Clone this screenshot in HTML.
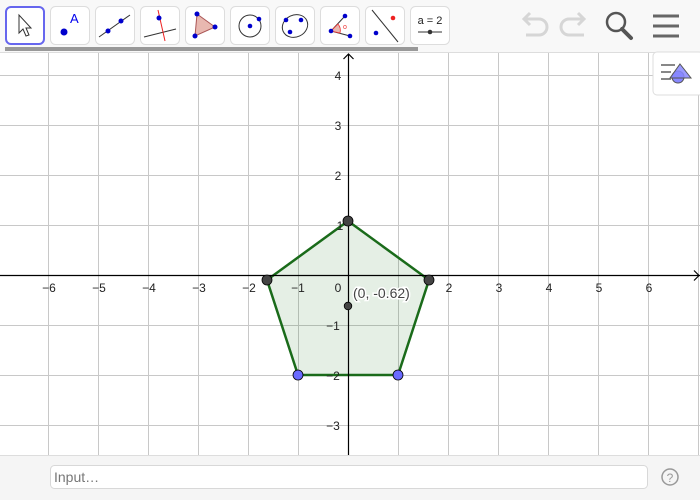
<!DOCTYPE html>
<html><head><meta charset="utf-8"><style>
html,body{margin:0;padding:0;width:700px;height:500px;overflow:hidden;background:#fff;font-family:"Liberation Sans",sans-serif}
svg{display:block}
</style></head><body>
<svg width="700" height="500" viewBox="0 0 700 500" xmlns="http://www.w3.org/2000/svg" font-family="Liberation Sans, sans-serif">
<g stroke="#c8c8c8" stroke-width="1">
<line x1="48.5" y1="52" x2="48.5" y2="455"/><line x1="98.5" y1="52" x2="98.5" y2="455"/><line x1="148.5" y1="52" x2="148.5" y2="455"/><line x1="198.5" y1="52" x2="198.5" y2="455"/><line x1="248.5" y1="52" x2="248.5" y2="455"/><line x1="298.5" y1="52" x2="298.5" y2="455"/><line x1="398.5" y1="52" x2="398.5" y2="455"/><line x1="448.5" y1="52" x2="448.5" y2="455"/><line x1="498.5" y1="52" x2="498.5" y2="455"/><line x1="548.5" y1="52" x2="548.5" y2="455"/><line x1="598.5" y1="52" x2="598.5" y2="455"/><line x1="648.5" y1="52" x2="648.5" y2="455"/><line x1="698.5" y1="52" x2="698.5" y2="455"/>
<line x1="0" y1="75.5" x2="700" y2="75.5"/><line x1="0" y1="125.5" x2="700" y2="125.5"/><line x1="0" y1="175.5" x2="700" y2="175.5"/><line x1="0" y1="225.5" x2="700" y2="225.5"/><line x1="0" y1="325.5" x2="700" y2="325.5"/><line x1="0" y1="375.5" x2="700" y2="375.5"/><line x1="0" y1="425.5" x2="700" y2="425.5"/>
</g>
<polygon points="348,221 429,280 398,375 298,375 267,280" fill="#006400" fill-opacity="0.1" stroke="#1a6b1a" stroke-width="2.5" stroke-linejoin="round"/>
<g stroke="#000" stroke-width="1.2" fill="none">
<line x1="0" y1="275.5" x2="700" y2="275.5"/>
<line x1="348.5" y1="54" x2="348.5" y2="455"/>
<polyline points="343.5,59 348.5,54 353.5,59"/>
<polyline points="694,270.5 699,275.5 694,280.5"/>
</g>
<g font-size="12" fill="#222" text-anchor="middle">
<text x="49" y="292">−6</text><text x="99" y="292">−5</text><text x="149" y="292">−4</text><text x="199" y="292">−3</text><text x="249" y="292">−2</text><text x="298" y="292">−1</text><text x="338" y="292">0</text><text x="449" y="292">2</text><text x="499" y="292">3</text><text x="549" y="292">4</text><text x="599" y="292">5</text><text x="649" y="292">6</text>
<text x="338" y="80">4</text><text x="338" y="130">3</text><text x="338" y="180">2</text><text x="340" y="230">1</text>
<text x="333" y="330">−1</text><text x="333" y="380">−2</text><text x="333" y="430">−3</text>
</g>
<g stroke="#000" stroke-width="0.8">
<circle cx="348" cy="221" r="5" fill="#444"/><circle cx="429" cy="280" r="5" fill="#444"/><circle cx="267" cy="280" r="5" fill="#444"/>
<circle cx="298" cy="375" r="5" fill="#6a6aff"/><circle cx="398" cy="375" r="5" fill="#6a6aff"/>
<circle cx="348" cy="306" r="3.8" fill="#444"/>
</g>
<text x="353" y="298" font-size="14" fill="#444" stroke="#fff" stroke-width="3" paint-order="stroke">(0, -0.62)</text>
<rect x="0" y="0" width="700" height="52" fill="#f8f8f8"/>
<line x1="0" y1="52.5" x2="700" y2="52.5" stroke="#ddd"/>
<rect x="5" y="47" width="413" height="4" fill="#999"/>
<g fill="#fff" stroke="#ddd">
<rect x="50.5" y="6.5" width="39" height="38" rx="5"/><rect x="95.5" y="6.5" width="39" height="38" rx="5"/><rect x="140.5" y="6.5" width="39" height="38" rx="5"/><rect x="185.5" y="6.5" width="39" height="38" rx="5"/><rect x="230.5" y="6.5" width="39" height="38" rx="5"/><rect x="275.5" y="6.5" width="39" height="38" rx="5"/><rect x="320.5" y="6.5" width="39" height="38" rx="5"/><rect x="365.5" y="6.5" width="39" height="38" rx="5"/><rect x="410.5" y="6.5" width="39" height="38" rx="5"/>
</g>
<rect x="6" y="7" width="38" height="37" rx="5" fill="#fff" stroke="#6666ee" stroke-width="2"/>
<path d="M19,15 L19,33 L23,29 L26,36 L29,35 L26,28 L31,28 Z" fill="#fff" stroke="#333" stroke-width="1"/>
<circle cx="64" cy="32" r="3.5" fill="#0000cc"/><text x="70" y="23" font-size="13" fill="#0000ee">A</text>
<line x1="99" y1="37" x2="130" y2="15" stroke="#333"/><circle cx="108" cy="31" r="2.5" fill="#0000cc"/><circle cx="121" cy="21" r="2.5" fill="#0000cc"/>
<line x1="144" y1="37" x2="176" y2="29" stroke="#333"/><line x1="158" y1="10" x2="165" y2="41" stroke="#e22"/><circle cx="159" cy="18" r="2.5" fill="#0000cc"/>
<polygon points="197,14 215,27 195,36" fill="#e8b8b0" stroke="#a55" stroke-width="1"/><circle cx="197" cy="14" r="2.5" fill="#0000cc"/><circle cx="215" cy="27" r="2.5" fill="#0000cc"/><circle cx="195" cy="36" r="2.5" fill="#0000cc"/>
<circle cx="250" cy="26" r="11" fill="none" stroke="#333"/><circle cx="250" cy="26" r="2.3" fill="#0000cc"/><circle cx="259" cy="19" r="2.3" fill="#0000cc"/>
<ellipse cx="295" cy="26" rx="13" ry="11" fill="none" stroke="#333" transform="rotate(-25 295 26)"/><circle cx="286" cy="20" r="2.3" fill="#0000cc"/><circle cx="301" cy="20" r="2.3" fill="#0000cc"/><circle cx="290" cy="32" r="2.3" fill="#0000cc"/>
<path d="M331,31 L345,16 M331,31 L350,36" stroke="#333" fill="none"/><path d="M331,31 L338,24 A10,10 0 0 1 340,33 Z" fill="#e8b8b0" stroke="#e33" stroke-width="0.8"/><text x="343" y="29" font-size="7" fill="#e33">o</text><circle cx="331" cy="31" r="2.3" fill="#0000cc"/><circle cx="345" cy="16" r="2.3" fill="#0000cc"/><circle cx="350" cy="36" r="2.3" fill="#0000cc"/>
<line x1="372" y1="10" x2="398" y2="42" stroke="#333"/><circle cx="393" cy="18" r="2.3" fill="#e22"/><circle cx="376" cy="33" r="2.3" fill="#0000cc"/>
<text x="430" y="24" font-size="11" fill="#222" text-anchor="middle">a = 2</text><line x1="418" y1="32" x2="442" y2="32" stroke="#333"/><circle cx="430" cy="32" r="2.3" fill="#333"/>
<g fill="none" stroke="#d6d6d6" stroke-width="3">
<path d="M526,35 H539 A8,8 0 0 0 539,19 H524"/><path d="M530,13 L524,19 L530,25"/>
<path d="M584,35 H569 A8,8 0 0 1 569,19 H584"/><path d="M578,13 L584,19 L578,25"/>
</g>
<circle cx="616" cy="22" r="9" fill="none" stroke="#555" stroke-width="2.5"/><line x1="622" y1="29" x2="631" y2="38" stroke="#555" stroke-width="4" stroke-linecap="round"/>
<g stroke="#666" stroke-width="3"><line x1="653" y1="16" x2="679" y2="16"/><line x1="653" y1="26" x2="679" y2="26"/><line x1="653" y1="36" x2="679" y2="36"/></g>
<rect x="653" y="52" width="50" height="43" rx="4" fill="#fff" stroke="#ddd"/>
<g stroke="#888" stroke-width="2"><line x1="661" y1="65" x2="675" y2="65"/><line x1="661" y1="72" x2="671" y2="72"/><line x1="661" y1="79" x2="671" y2="79"/></g>
<circle cx="678" cy="77" r="6" fill="#8888ff" stroke="#555"/><polygon points="680,64 691,78 670,78" fill="#8888ff" stroke="#555" fill-opacity="0.85"/>
<rect x="0" y="455" width="700" height="45" fill="#f5f5f5"/>
<line x1="0" y1="455.5" x2="700" y2="455.5" stroke="#ddd"/>
<rect x="50.5" y="465.5" width="597" height="23" rx="4" fill="#fff" stroke="#d8d8d8"/>
<text x="54" y="482" font-size="14" fill="#777">Input…</text>
<circle cx="670" cy="477" r="8" fill="none" stroke="#999" stroke-width="1.5"/><text x="670" y="482" font-size="12" fill="#999" text-anchor="middle">?</text>
</svg>
</body></html>
